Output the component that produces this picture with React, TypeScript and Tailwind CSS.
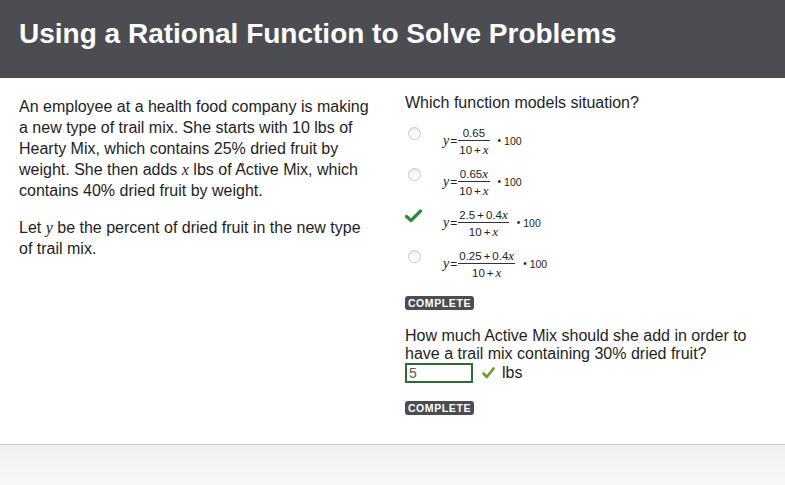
import React from "react";

const serif = { fontFamily: '"Liberation Serif", "DejaVu Serif", serif' } as const;

function X() {
  return (
    <span className="italic text-[13px]" style={serif}>
      x
    </span>
  );
}

function Formula({ num, den }: { num: React.ReactNode; den: React.ReactNode }) {
  return (
    <div className="flex items-center text-[11.5px] leading-none text-[#222]">
      <span className="italic text-[14px] mr-[1px]" style={serif}>
        y
      </span>
      <span className="text-[12px] mr-[1px]">=</span>
      <div className="flex flex-col items-center">
        <div className="px-[1px] pb-[1px] h-[12px] flex items-end">{num}</div>
        <div className="h-px w-full bg-[#333]" />
        <div className="px-[1px] pt-[2px] h-[13px] flex items-start">{den}</div>
      </div>
      <span className="ml-[8px] text-[10px]">•</span>
      <span className="ml-[3px] text-[10.5px]">100</span>
    </div>
  );
}

function Den() {
  return (
    <span className="flex items-baseline">
      10<span className="mx-[2px]">+</span>
      <X />
    </span>
  );
}

function Radio() {
  return (
    <div className="ml-[3px] mt-[7px] w-[13px] h-[13px] rounded-full border border-[#c9c9c9] bg-gradient-to-b from-[#f2f2f2] to-[#ffffff] shadow-[inset_0_1px_1px_rgba(0,0,0,0.06)]" />
  );
}

function Check() {
  return (
    <svg className="mt-[7px]" width="17" height="14" viewBox="0 0 17 14">
      <path d="M1.5 7.5 L6 11.5 L15.5 2" fill="none" stroke="#2f8a3a" strokeWidth="3.2" strokeLinecap="round" strokeLinejoin="round" />
    </svg>
  );
}

function Badge() {
  return (
    <div className="w-[69px] h-[14px] rounded-[3px] bg-[#4b4d53] text-white text-[10.5px] font-bold leading-[14px] text-center tracking-[0.6px]">
      COMPLETE
    </div>
  );
}

export default function App() {
  const options = [
    { mark: "radio", num: <span>0.65</span> },
    {
      mark: "radio",
      num: (
        <span className="flex items-baseline">
          0.65
          <X />
        </span>
      ),
    },
    {
      mark: "check",
      num: (
        <span className="flex items-baseline">
          2.5<span className="mx-[2px]">+</span>0.4
          <X />
        </span>
      ),
    },
    {
      mark: "radio",
      num: (
        <span className="flex items-baseline">
          0.25<span className="mx-[2px]">+</span>0.4
          <X />
        </span>
      ),
    },
  ];

  return (
    <div
      className="w-[785px] h-[485px] flex flex-col bg-white text-[#1e1e1e]"
      style={{ fontFamily: '"Liberation Sans", Arial, sans-serif' }}
    >
      <header className="h-[78px] shrink-0 bg-[#4b4d53] px-[19px] pt-[18px]">
        <h1 className="text-[28px] leading-[32px] font-bold text-white">
          Using a Rational Function to Solve Problems
        </h1>
      </header>

      <main className="h-[366px] shrink-0 flex">
        <section className="w-[356px] ml-[19px] pt-[18px] text-[16px] leading-[21px]">
          <p>
            An employee at a health food company is making a new type of trail mix. She starts with 10 lbs of
            Hearty Mix, which contains 25% dried fruit by weight. She then adds{" "}
            <span className="italic" style={serif}>
              x
            </span>{" "}
            lbs of{" "}
            <span className="relative">
              A
              <span className="absolute left-[6px] top-[2px] w-[3px] h-[3px] rounded-full bg-[#e02020]" />
            </span>
            ctive Mix, which contains 40% dried fruit by weight.
          </p>
          <p className="mt-[16px]">
            Let{" "}
            <span className="italic" style={serif}>
              y
            </span>{" "}
            be the percent of dried fruit in the new type of trail mix.
          </p>
        </section>

        <section className="ml-[30px] w-[370px] pt-[16px] text-[16px] leading-[18px]">
          <p>Which function models situation?</p>
          <div className="mt-[8px] flex flex-col">
            {options.map((o, i) => (
              <div key={i} className="h-[41px] flex items-start">
                <div className="w-[38px] shrink-0">{o.mark === "radio" ? <Radio /> : <Check />}</div>
                <div className="mt-[8px]">
                  <Formula num={o.num} den={<Den />} />
                </div>
              </div>
            ))}
          </div>
          <div className="mt-[12px]">
            <Badge />
          </div>
          <p className="mt-[17px]">
            How much Active Mix should she add in order to have a trail mix containing 30% dried fruit?
          </p>
          <div className="flex items-center h-[20px]">
            <div className="w-[68px] h-[20px] border-2 border-[#2e6b34] text-[14px] leading-[16px] text-[#5a5a5a] pl-[2px]">
              5
            </div>
            <svg className="ml-[9px]" width="13" height="12" viewBox="0 0 13 12">
              <path d="M1.5 6.5 L4.8 10 L11.5 1.5" fill="none" stroke="#6b9b2b" strokeWidth="2.6" strokeLinecap="round" strokeLinejoin="round" />
            </svg>
            <span className="ml-[7px]">lbs</span>
          </div>
          <div className="mt-[18px]">
            <Badge />
          </div>
        </section>
      </main>

      <footer className="flex-1 border-t border-[#cbcbcb] bg-gradient-to-b from-[#f1f1f1] to-[#f8f8f8]" />
    </div>
  );
}
